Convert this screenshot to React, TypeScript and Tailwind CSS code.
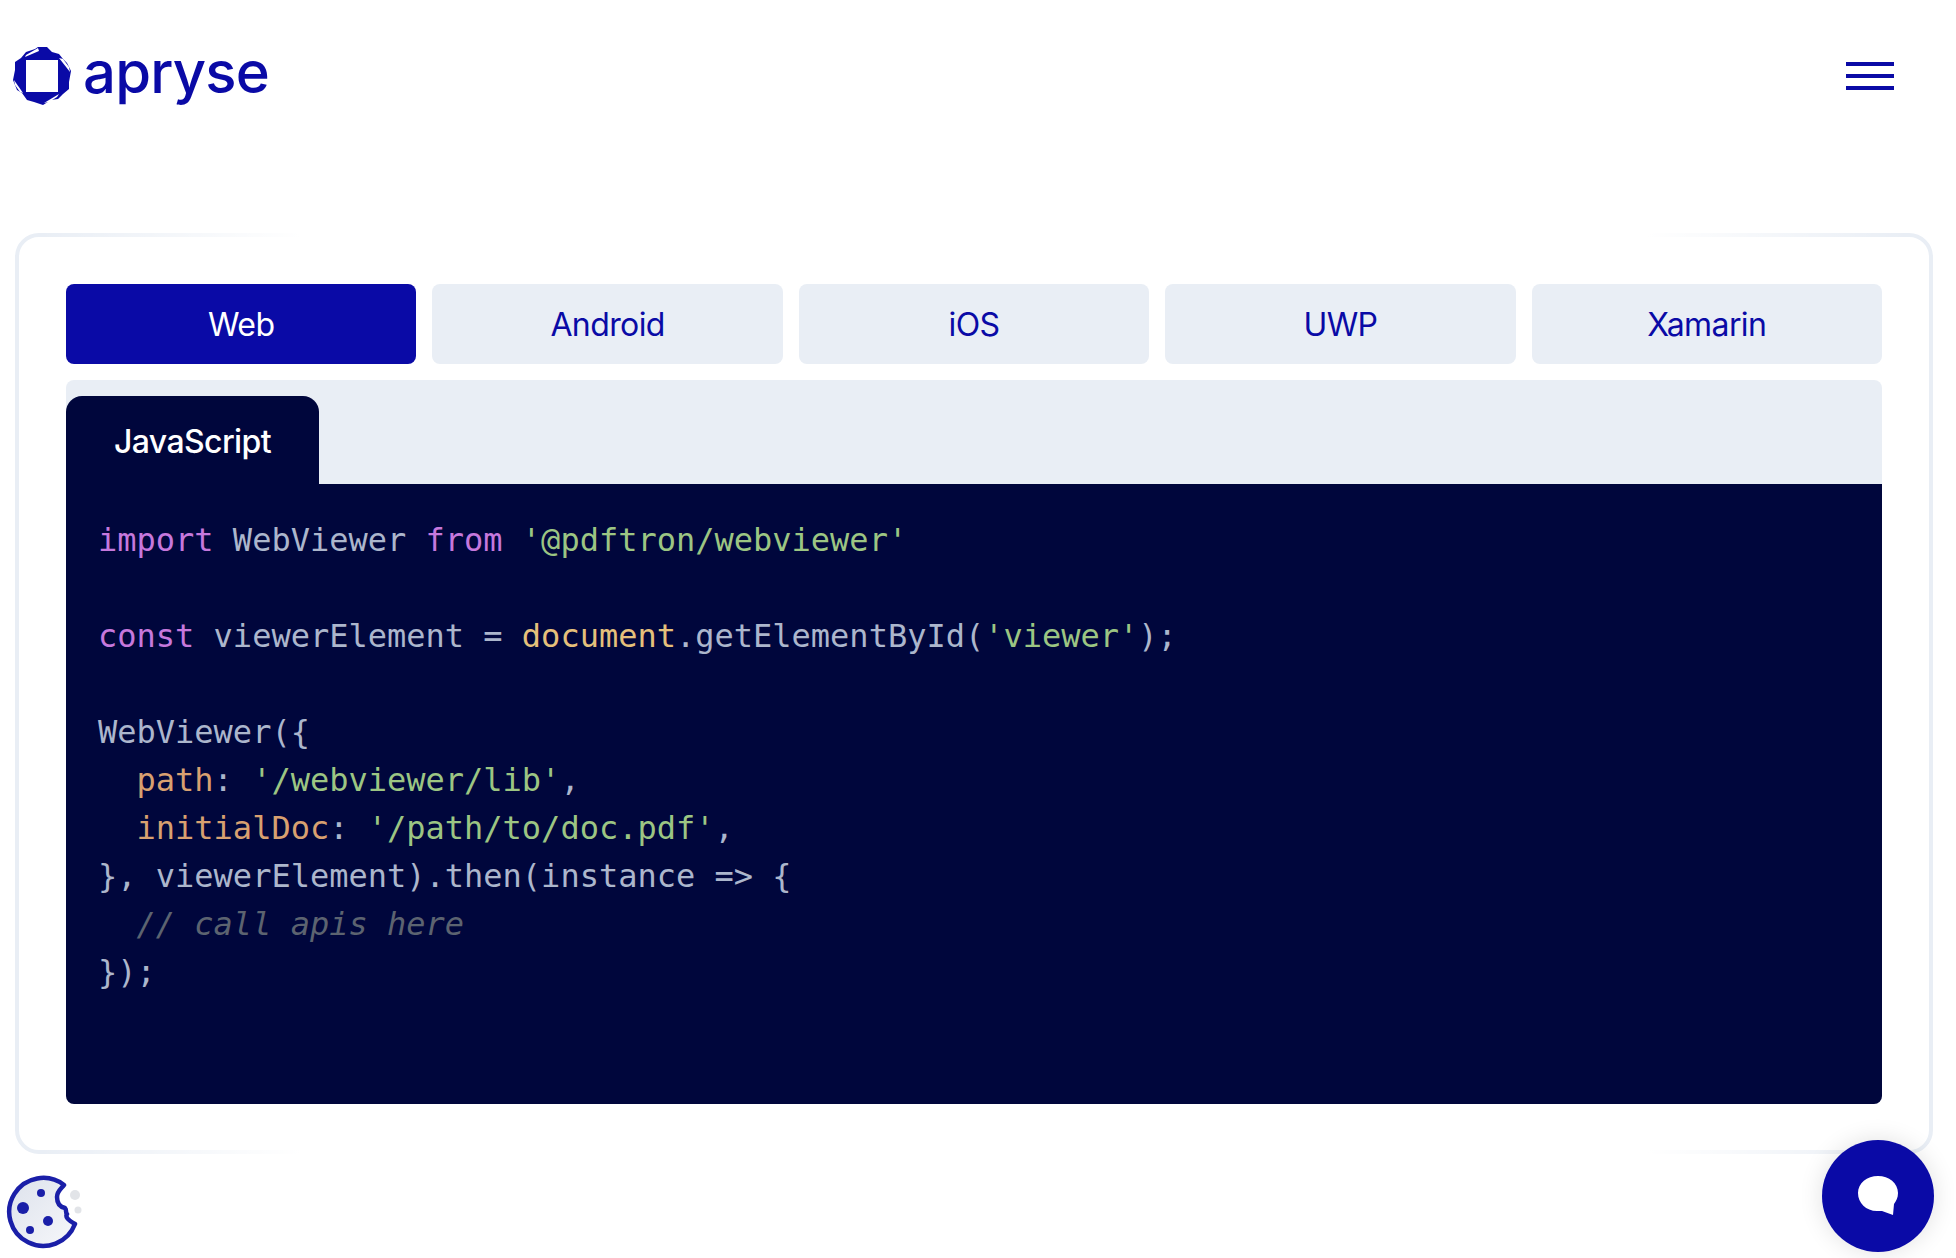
const tabs = ["Web", "Android", "iOS", "UWP", "Xamarin"];

const kw = "text-[#c678dd]";
const str = "text-[#9cc583]";
const obj = "text-[#e5c07b]";
const prop = "text-[#d8a070]";

function Logo() {
  return (
    <svg width="58" height="58" viewBox="0 0 58 58" className="shrink-0">
      <path
        fill="#0a0aa6"
        fillRule="evenodd"
        d="M22 2 L25 0 L34 0 L39 5 L46 7 L50 12 L54 16 L58 24 L56 35 L56 42 L50 47 L45 52 L38 53 L30 58 L21 55 L14 53 L9 46 L4 43 L0 33 L2 23 L2 15 L8 11 L13 5 Z M13 13 L13 45 L45 45 L45 13 Z"
      />
      {/* slits between the petals */}
      <path fill="#fff" d="M25 1 L13 8 L12 10 L26 4 Z" />
      <path fill="#fff" d="M46 11 L57 25 L56 20 L50 12 Z" />
      <path fill="#fff" d="M46 47 L31 56 L36 55 L44 50 Z" />
      <path fill="#fff" d="M1 33 L10 46 L7 45 L2 38 Z" />
    </svg>
  );
}

function Cookie() {
  return (
    <svg width="84" height="76" viewBox="0 0 84 76">
      <defs>
        <linearGradient id="cookie-fill" x1="0" y1="0" x2="1" y2="1">
          <stop offset="0" stopColor="#dde2ec" />
          <stop offset="1" stopColor="#f6f7fa" />
        </linearGradient>
      </defs>
      <path
        d="M59 10 C57 13 52 16 52 22 C52 28 55 32 60 33 C62 35 60 37 62 39 C60 42 63 45 70 49 A34 34 0 1 1 59 10 Z"
        fill="url(#cookie-fill)"
        stroke="#1a1fa8"
        strokeWidth="4.5"
        strokeLinejoin="round"
      />
      <circle cx="18" cy="33" r="6" fill="#1a1fa8" />
      <circle cx="36" cy="18" r="4" fill="#1a1fa8" />
      <circle cx="43" cy="46" r="5" fill="#1a1fa8" />
      <circle cx="25" cy="55" r="4" fill="#1a1fa8" />
      <circle cx="70" cy="20" r="5" fill="#e2e4e8" />
      <circle cx="73" cy="35" r="3.5" fill="#e2e4e8" />
    </svg>
  );
}

export default function App() {
  return (
    <div className="relative h-[1258px] overflow-hidden bg-white font-['Inter',sans-serif]">
      {/* Header */}
      <header className="flex h-[233px] items-start justify-between pl-[13px] pr-[62px] pt-[47px]">
        <div className="flex items-start gap-[12px]">
          <Logo />
          <span className="font-['Inter',sans-serif] text-[58px] leading-[51px] font-medium tracking-[-0.8px] text-[#0a0aa6]">
            apryse
          </span>
        </div>
        <div className="mt-[15px] flex w-[48px] flex-col gap-[8px]">
          <div className="h-[4px] bg-[#0a0aa6]" />
          <div className="h-[4px] bg-[#0a0aa6]" />
          <div className="h-[4px] bg-[#0a0aa6]" />
        </div>
      </header>

      {/* Card */}
      <div className="relative mx-[15px] h-[921px] w-[1918px] rounded-[24px] border-4 border-[#e9eef5] p-[47px]">
        {/* top and bottom borders fade out towards the middle */}
        <div className="absolute left-[20px] right-[20px] top-[-4px] h-[4px] bg-[linear-gradient(90deg,transparent,#fff_14%,#fff_86%,transparent)]" />
        <div className="absolute bottom-[-4px] left-[20px] right-[20px] h-[4px] bg-[linear-gradient(90deg,transparent,#fff_14%,#fff_86%,transparent)]" />

        <div className="flex gap-[16px]">
          {tabs.map((t, i) => (
            <div
              key={t}
              className={
                i === 0
                  ? "flex h-[80px] flex-1 items-center justify-center rounded-[8px] bg-[#0a0aa6] pt-[2px] text-[32px] tracking-[-0.6px] text-white"
                  : "flex h-[80px] flex-1 items-center justify-center rounded-[8px] bg-[#e9eef5] pt-[2px] text-[32px] tracking-[-0.6px] text-[#0a0aa6]"
              }
            >
              {t}
            </div>
          ))}
        </div>

        <div className="mt-[16px] rounded-[8px] bg-[#e9eef5] pt-[16px]">
          <div className="flex h-[88px] w-[253px] items-center justify-center rounded-t-[16px] bg-[#00063c] pt-[3px] text-[32px] font-medium tracking-[-0.6px] text-white">
            JavaScript
          </div>
          <div className="h-[620px] whitespace-pre rounded-b-[8px] bg-[#00063c] px-[32px] pt-[32px] font-['DejaVu_Sans_Mono',monospace] text-[32px] leading-[48px] text-[#acb6cc]">
            <div>
              <span className={kw}>import</span> WebViewer <span className={kw}>from</span>{" "}
              <span className={str}>'@pdftron/webviewer'</span>
            </div>
            <div className="h-[48px]" />
            <div>
              <span className={kw}>const</span> viewerElement = <span className={obj}>document</span>.getElementById(
              <span className={str}>'viewer'</span>);
            </div>
            <div className="h-[48px]" />
            <div>{"WebViewer({"}</div>
            <div>
              {"  "}
              <span className={prop}>path</span>: <span className={str}>'/webviewer/lib'</span>,
            </div>
            <div>
              {"  "}
              <span className={prop}>initialDoc</span>: <span className={str}>'/path/to/doc.pdf'</span>,
            </div>
            <div>{"}, viewerElement).then(instance => {"}</div>
            <div>
              {"  "}
              <span className="italic text-[#5c6370]">// call apis here</span>
            </div>
            <div>{"});"}</div>
          </div>
        </div>
      </div>

      {/* Cookie settings */}
      <div className="absolute left-[5px] top-[1175px]">
        <Cookie />
      </div>

      {/* Chat */}
      <div className="absolute left-[1822px] top-[1140px] flex h-[112px] w-[112px] items-center justify-center rounded-full bg-[#0a0aa6] shadow-[0_0_24px_rgba(0,0,0,0.12)]">
        <svg width="42" height="42" viewBox="0 0 42 42">
          <path
            fill="#fff"
            d="M21 1 C32 1 41 8 41 18 C41 23 39 26 37 29 L36 40 L25 36 C23 36 22 36 20 36 C9 36 1 28 1 18 C1 8 10 1 21 1 Z"
          />
        </svg>
      </div>
    </div>
  );
}
